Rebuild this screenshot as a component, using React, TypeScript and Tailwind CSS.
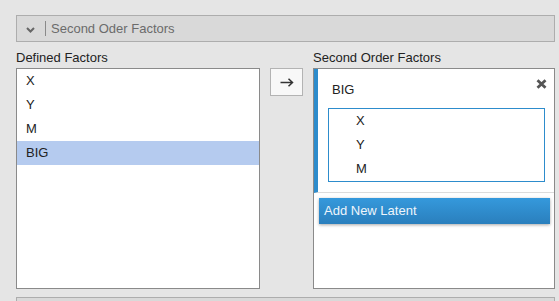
import React, { useState } from 'react';

const definedFactors = ['X', 'Y', 'M', 'BIG'];

const latents = [{ name: 'BIG', factors: ['X', 'Y', 'M'] }];

export default function App() {
  const [selected, setSelected] = useState('BIG');

  return (
    <div
      className="w-[559px] h-[301px] overflow-hidden bg-[#e5e5e5] pl-4 pr-1 pt-[15px] text-[13px] text-[#222]"
      style={{ fontFamily: '"Liberation Sans", Arial, sans-serif' }}
    >
      {/* Collapsible header */}
      <div className="flex items-center h-[27px] border border-[#adadad] bg-[#d9d9d9]">
        <svg width="9" height="6" viewBox="0 0 9 6" className="ml-[9px] mt-[2px]">
          <path d="M1 1 L4.5 4.5 L8 1" fill="none" stroke="#666" strokeWidth="2" />
        </svg>
        <div className="ml-[10px] w-px h-[15px] bg-[#8a8a8a]" />
        <span className="ml-[5px] text-[#6b6b6b]">Second Oder Factors</span>
      </div>

      <div className="flex mt-[8px]">
        {/* Defined factors */}
        <div className="w-[244px] flex flex-col">
          <div className="leading-[16px] mb-[2px] text-[#222]">Defined Factors</div>
          <div className="h-[221px] border border-[#8a8a8a] bg-white">
            {definedFactors.map((f) => (
              <div
                key={f}
                onClick={() => setSelected(f)}
                className={`h-6 leading-6 pl-[9px] ${selected === f ? 'bg-[#b5cbef]' : ''}`}
              >
                {f}
              </div>
            ))}
          </div>
        </div>

        {/* Move button */}
        <div className="pt-[18px] ml-[10px] mr-[10px]">
          <button className="w-[33px] h-[28px] border border-[#b3b3b3] bg-[#f8f8f8] flex items-center justify-center">
            <svg width="14" height="9" viewBox="0 0 14 9">
              <path d="M0.5 4.5 H12.5 M8.5 0.8 L12.5 4.5 L8.5 8.2" fill="none" stroke="#333" strokeWidth="1.5" />
            </svg>
          </button>
        </div>

        {/* Second order factors */}
        <div className="flex-1 flex flex-col">
          <div className="leading-[16px] mb-[2px] text-[#222]">Second Order Factors</div>
          <div className="h-[221px] border border-[#8a8a8a] bg-white">
            {latents.map((l) => (
              <div key={l.name} className="relative border-l-[4px] border-[#2d8ccc] border-b border-b-[#dcdcdc] pl-[10px] pr-[9px] pt-[13px] pb-[10px]">
                <div className="leading-[16px] pl-[4px]">{l.name}</div>
                <svg width="11" height="10" viewBox="0 0 11 10" className="absolute right-[7px] top-[10px]">
                  <path d="M1.5 1.2 L9.5 8.8 M9.5 1.2 L1.5 8.8" stroke="#555" strokeWidth="2.8" />
                </svg>
                <div className="mt-[10px] border border-[#2d8ccc]">
                  {l.factors.map((f) => (
                    <div key={f} className="h-6 leading-6 pl-[27px]">
                      {f}
                    </div>
                  ))}
                </div>
              </div>
            ))}
            <button className="mt-[5px] ml-[5px] w-[231px] h-[26px] text-left pl-[5px] text-[#eef5fb] bg-gradient-to-b from-[#3599dc] to-[#2a7fbd] shadow-[0_1px_3px_rgba(0,0,0,0.35)]">
              Add New Latent
            </button>
          </div>
        </div>
      </div>

      {/* Next section header */}
      <div className="mt-[8px] h-[27px] border border-[#adadad] bg-[#d9d9d9]" />
    </div>
  );
}
